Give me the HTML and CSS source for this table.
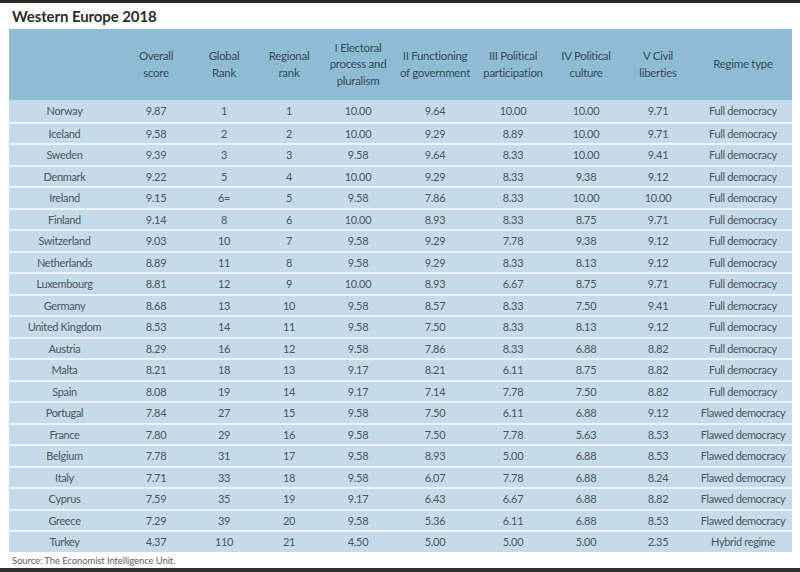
FILE: index.html
```html
<!DOCTYPE html>
<html>
<head>
<meta charset="utf-8">
<link rel="stylesheet" href="styles.css">
</head>
<body>
<div class="page">
  <div class="bar-top"></div>
  <h1 class="title">Western Europe 2018</h1>
  <table class="eiu">
    <colgroup>
      <col class="c-country"><col class="c-overall"><col class="c-global"><col class="c-regional"><col class="c-elect"><col class="c-func"><col class="c-part"><col class="c-cult"><col class="c-civil"><col class="c-regime">
    </colgroup>
    <thead>
      <tr>
        <th></th>
        <th>Overall<br>score</th>
        <th>Global<br>Rank</th>
        <th>Regional<br>rank</th>
        <th>I Electoral<br>process and<br>pluralism</th>
        <th>II Functioning<br>of government</th>
        <th>III Political<br>participation</th>
        <th>IV Political<br>culture</th>
        <th>V Civil<br>liberties</th>
        <th>Regime type</th>
      </tr>
    </thead>
    <tbody>
      <tr><td>Norway</td><td>9.87</td><td>1</td><td>1</td><td>10.00</td><td>9.64</td><td>10.00</td><td>10.00</td><td>9.71</td><td>Full democracy</td></tr>
      <tr><td>Iceland</td><td>9.58</td><td>2</td><td>2</td><td>10.00</td><td>9.29</td><td>8.89</td><td>10.00</td><td>9.71</td><td>Full democracy</td></tr>
      <tr><td>Sweden</td><td>9.39</td><td>3</td><td>3</td><td>9.58</td><td>9.64</td><td>8.33</td><td>10.00</td><td>9.41</td><td>Full democracy</td></tr>
      <tr><td>Denmark</td><td>9.22</td><td>5</td><td>4</td><td>10.00</td><td>9.29</td><td>8.33</td><td>9.38</td><td>9.12</td><td>Full democracy</td></tr>
      <tr><td>Ireland</td><td>9.15</td><td>6=</td><td>5</td><td>9.58</td><td>7.86</td><td>8.33</td><td>10.00</td><td>10.00</td><td>Full democracy</td></tr>
      <tr><td>Finland</td><td>9.14</td><td>8</td><td>6</td><td>10.00</td><td>8.93</td><td>8.33</td><td>8.75</td><td>9.71</td><td>Full democracy</td></tr>
      <tr><td>Switzerland</td><td>9.03</td><td>10</td><td>7</td><td>9.58</td><td>9.29</td><td>7.78</td><td>9.38</td><td>9.12</td><td>Full democracy</td></tr>
      <tr><td>Netherlands</td><td>8.89</td><td>11</td><td>8</td><td>9.58</td><td>9.29</td><td>8.33</td><td>8.13</td><td>9.12</td><td>Full democracy</td></tr>
      <tr><td>Luxembourg</td><td>8.81</td><td>12</td><td>9</td><td>10.00</td><td>8.93</td><td>6.67</td><td>8.75</td><td>9.71</td><td>Full democracy</td></tr>
      <tr><td>Germany</td><td>8.68</td><td>13</td><td>10</td><td>9.58</td><td>8.57</td><td>8.33</td><td>7.50</td><td>9.41</td><td>Full democracy</td></tr>
      <tr><td>United Kingdom</td><td>8.53</td><td>14</td><td>11</td><td>9.58</td><td>7.50</td><td>8.33</td><td>8.13</td><td>9.12</td><td>Full democracy</td></tr>
      <tr><td>Austria</td><td>8.29</td><td>16</td><td>12</td><td>9.58</td><td>7.86</td><td>8.33</td><td>6.88</td><td>8.82</td><td>Full democracy</td></tr>
      <tr><td>Malta</td><td>8.21</td><td>18</td><td>13</td><td>9.17</td><td>8.21</td><td>6.11</td><td>8.75</td><td>8.82</td><td>Full democracy</td></tr>
      <tr><td>Spain</td><td>8.08</td><td>19</td><td>14</td><td>9.17</td><td>7.14</td><td>7.78</td><td>7.50</td><td>8.82</td><td>Full democracy</td></tr>
      <tr><td>Portugal</td><td>7.84</td><td>27</td><td>15</td><td>9.58</td><td>7.50</td><td>6.11</td><td>6.88</td><td>9.12</td><td>Flawed democracy</td></tr>
      <tr><td>France</td><td>7.80</td><td>29</td><td>16</td><td>9.58</td><td>7.50</td><td>7.78</td><td>5.63</td><td>8.53</td><td>Flawed democracy</td></tr>
      <tr><td>Belgium</td><td>7.78</td><td>31</td><td>17</td><td>9.58</td><td>8.93</td><td>5.00</td><td>6.88</td><td>8.53</td><td>Flawed democracy</td></tr>
      <tr><td>Italy</td><td>7.71</td><td>33</td><td>18</td><td>9.58</td><td>6.07</td><td>7.78</td><td>6.88</td><td>8.24</td><td>Flawed democracy</td></tr>
      <tr><td>Cyprus</td><td>7.59</td><td>35</td><td>19</td><td>9.17</td><td>6.43</td><td>6.67</td><td>6.88</td><td>8.82</td><td>Flawed democracy</td></tr>
      <tr><td>Greece</td><td>7.29</td><td>39</td><td>20</td><td>9.58</td><td>5.36</td><td>6.11</td><td>6.88</td><td>8.53</td><td>Flawed democracy</td></tr>
      <tr><td>Turkey</td><td>4.37</td><td>110</td><td>21</td><td>4.50</td><td>5.00</td><td>5.00</td><td>5.00</td><td>2.35</td><td>Hybrid regime</td></tr>
    </tbody>
  </table>
  <p class="source">Source: The Economist Intelligence Unit.</p>
  <div class="spacer"></div>
  <div class="bar-bottom"></div>
</div>
</body>
</html>
```
FILE: styles.css
```css
html, body {
  margin: 0;
  padding: 0;
  background: #ffffff;
}
.page {
  width: 800px;
  height: 572px;
  display: flex;
  flex-direction: column;
  font-family: Lato, "Open Sans", "Liberation Sans", sans-serif;
  color: #4f5559;
  overflow: hidden;
}
.bar-top {
  height: 3px;
  background: #2e2a28;
  flex: none;
}
.bar-bottom {
  height: 4px;
  background: #2f2f31;
  flex: none;
}
.spacer {
  flex: 1;
}
.title {
  margin: 0;
  height: 26px;
  line-height: 26px;
  padding-left: 12px;
  font-size: 15px;
  font-weight: 700;
  color: #2b2b2b;
  letter-spacing: -0.1px;
  flex: none;
}
.eiu {
  margin-left: 9px;
  width: 783px;
  border-collapse: collapse;
  table-layout: fixed;
  flex: none;
}
.c-country { width: 111px; }
.c-overall { width: 72px; }
.c-global { width: 64px; }
.c-regional { width: 66px; }
.c-elect { width: 72px; }
.c-func { width: 82px; }
.c-part { width: 74px; }
.c-cult { width: 72px; }
.c-civil { width: 72px; }
.c-regime { width: 98px; }
.eiu thead th {
  background: #8ebcd4;
  height: 71px;
  padding: 0;
  font-size: 11.5px;
  font-weight: 400;
  line-height: 16.5px;
  color: #3c4a55;
  text-align: center;
  vertical-align: middle;
  letter-spacing: -0.3px;
}
.eiu tbody td {
  background: #c4dbea;
  height: 19.5px;
  padding: 0;
  border-top: 2px solid #eef4f8;
  font-size: 11px;
  line-height: 19px;
  text-align: center;
  color: #4f5559;
  letter-spacing: -0.35px;
  white-space: nowrap;
}
.eiu tbody tr:first-child td {
  border-top: 0;
  height: 21.5px;
}
.source {
  margin: 0;
  padding: 2px 0 0 12px;
  font-size: 9.5px;
  line-height: 13px;
  color: #5b6166;
  letter-spacing: -0.1px;
  flex: none;
}
```
